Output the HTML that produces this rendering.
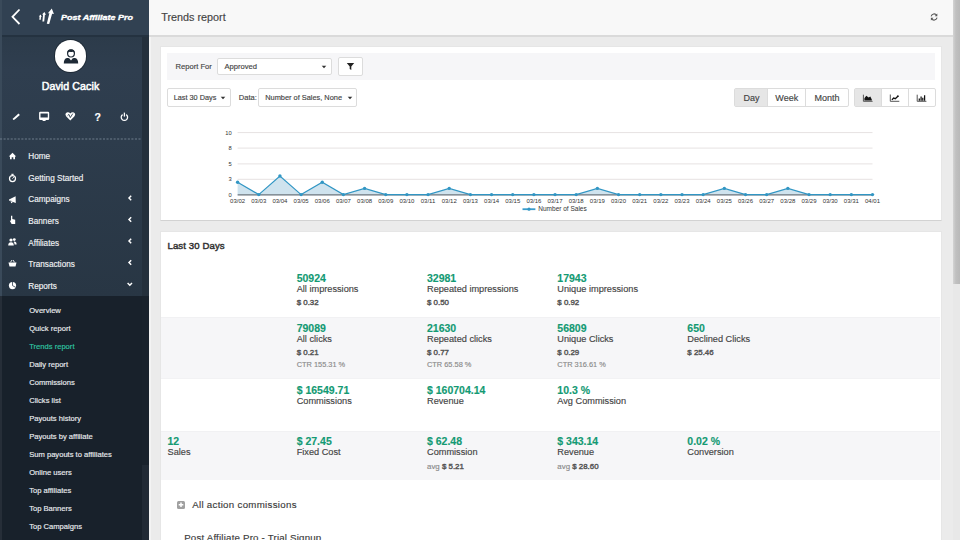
<!DOCTYPE html>
<html><head><meta charset="utf-8">
<style>
*{box-sizing:border-box;margin:0;padding:0}
html,body{width:960px;height:540px;overflow:hidden;background:#ebebeb;font-family:"Liberation Sans",sans-serif;color:#333;position:relative}
.a{position:absolute;white-space:nowrap;line-height:1;-webkit-text-stroke:0.15px currentColor}
svg.a{overflow:visible}
</style></head><body>
<div class="a" style="left:0px;top:0px;width:149px;height:540px;background:#2e3d4e;background:linear-gradient(#2c3b4a 36px,#2f3e4f 70px,#2d3c4c 140px,#283644 296px);"></div>
<div class="a" style="left:0px;top:0px;width:149px;height:35px;background:#314152;"></div>
<div class="a" style="left:0px;top:35px;width:149px;height:2px;background:#243240;"></div>
<div class="a" style="left:142px;top:36.6px;width:7px;height:259.4px;background:#24303c;"></div>
<div class="a" style="left:0px;top:296px;width:142px;height:244px;background:#18212b;"></div>
<div class="a" style="left:142px;top:296px;width:7px;height:244px;background:#19222c;"></div>
<div class="a" style="left:142px;top:465px;width:7px;height:75px;background:#212a35;"></div>
<div class="a" style="left:0px;top:0px;width:1.5px;height:296px;background:#3a4a5a;"></div>
<div class="a" style="left:0px;top:296px;width:1.5px;height:244px;background:#262e38;"></div>
<div class="a" style="left:149px;top:36px;width:2px;height:504px;background:#f3f3f3;"></div>
<svg class="a" style="left:0;top:0" width="149" height="140" viewBox="0 0 149 140"><path d="M19.5 9.5 L12.5 16.8 L19.5 24" fill="none" stroke="#fff" stroke-width="1.8"/><path d="M39.3 19.8 L39.6 16.6 L38.8 16.6 L40.5 14.6 L41.8 16.7 L41 16.7 L40.8 19.8Z" fill="#fff"/><path d="M42.4 21.6 L43.1 14.6 L42 14.6 L44.4 11.9 L46 14.7 L44.9 14.7 L44.2 21.6Z" fill="#fff"/><path d="M46.8 23.8 L49.4 13.3 L47.9 13.2 L51.8 8.6 L53.9 14 L52.1 13.7 L49.2 23.9Z" fill="#fff"/></svg>
<div class="a" style="left:60.50px;top:13.86px;font-size:7.9px;color:#fff;font-weight:700;font-style:italic;transform:scaleX(1.14);transform-origin:0 0;-webkit-text-stroke:0.35px #fff;">Post Affiliate Pro</div>
<div class="a" style="left:55.1px;top:40.4px;width:31.4px;height:31.4px;background:#fff;border-radius:50%;box-shadow:0 0 0 1px #1f2b37;"></div>
<svg class="a" style="left:60px;top:45px" width="22" height="22" viewBox="60 45 22 22"><circle cx="71" cy="53.6" r="3.4" fill="#fff" stroke="#1e2a36" stroke-width="1.2"/><path d="M67.3 53.4 Q67.1 49.3 71 49.3 Q74.9 49.3 74.7 53.4 Q74 51.9 72.6 51.7 Q71.4 52.4 69.9 51.8 Q68.1 52 67.3 53.4Z" fill="#1e2a36"/><path d="M63.8 63.4 Q63.8 58.6 67 58 Q68.5 57.8 69.2 58.2 L71 60.6 L72.8 58.2 Q73.5 57.8 75 58 Q78.2 58.6 78.2 63.4Z" fill="#1e2a36"/></svg>
<div class="a" style="left:41.70px;top:80.50px;font-size:10.6px;color:#fff;font-weight:400;-webkit-text-stroke:0.5px #fff;letter-spacing:0.1px;">David Cacik</div>
<svg class="a" style="left:0;top:100px" width="149" height="40" viewBox="0 100 149 40"><path d="M12.8 120 L13.3 118.3 L18.5 113.6 L19.9 115 L14.7 119.6Z" fill="#fff"/><path d="M40.3 111.8 H48 Q49.2 111.8 49.2 113 V118.8 Q49.2 120 48 120 H40.3 Q39.1 120 39.1 118.8 V113 Q39.1 111.8 40.3 111.8Z M40.5 113.5 V117.6 H47.8 V113.5Z" fill="#fff" fill-rule="evenodd"/><rect x="42.6" y="119.6" width="3" height="1.4" fill="#fff"/><path d="M70.3 120.4 L66.3 116.4 Q64.8 114.6 65.8 113.2 Q67.3 111.5 69.2 112.5 L70.3 113.4 L71.4 112.5 Q73.3 111.5 74.8 113.2 Q75.8 114.6 74.3 116.4Z" fill="#fff"/><path d="M67.6 115.6 L68.9 114.4 L70.3 117.6 L72.8 113.6" fill="none" stroke="#2e3d4e" stroke-width="0.9"/><path d="M122.6 114.6 A3.2 3.2 0 1 0 126.2 114.6" fill="none" stroke="#fff" stroke-width="1.3"/><path d="M124.4 112.6 V116.6" stroke="#fff" stroke-width="1.3"/></svg>
<div class="a" style="left:94.60px;top:112.18px;font-size:10.5px;color:#fff;font-weight:700;">?</div>
<svg class="a" style="left:0;top:138px" width="141" height="2" viewBox="0 0 141 2"><line x1="0" y1="1" x2="141" y2="1" stroke="#6f7d8b" stroke-width="1.1" stroke-dasharray="2.1 1.45"/></svg>
<div class="a" style="left:28.30px;top:153.31px;font-size:8.2px;color:#f0f2f4;font-weight:400;">Home</div>
<div class="a" style="left:28.30px;top:174.86px;font-size:8.2px;color:#f0f2f4;font-weight:400;">Getting Started</div>
<div class="a" style="left:28.30px;top:196.41px;font-size:8.2px;color:#f0f2f4;font-weight:400;">Campaigns</div>
<div class="a" style="left:28.30px;top:217.96px;font-size:8.2px;color:#f0f2f4;font-weight:400;">Banners</div>
<div class="a" style="left:28.30px;top:239.51px;font-size:8.2px;color:#f0f2f4;font-weight:400;">Affiliates</div>
<div class="a" style="left:28.30px;top:261.06px;font-size:8.2px;color:#f0f2f4;font-weight:400;">Transactions</div>
<div class="a" style="left:28.30px;top:282.61px;font-size:8.2px;color:#f0f2f4;font-weight:400;">Reports</div>
<svg class="a" style="left:0;top:140px" width="141" height="160" viewBox="0 140 141 160"><path d="M8.8 156.4 L12.5 152.8 L16.2 156.4 L15 156.4 L15 159.3 L13.3 159.3 L13.3 157.2 L11.7 157.2 L11.7 159.3 L10 159.3 L10 156.4Z" fill="#fff"/><circle cx="12.5" cy="178.6" r="3" fill="none" stroke="#fff" stroke-width="1.2"/><path d="M11.3 174.3 H13.7 M12.5 174.3 V175.6 M12.5 178.6 L13.8 177.2" stroke="#fff" stroke-width="1"/><path d="M9 199.6 L15.6 196.2 L15.8 203 L9 200.6Z M10.2 200.6 L11.3 203.2 L12.5 202.8 L11.8 201" fill="#fff"/><path d="M11 215.8 L12.3 215.8 L12.3 219 L15.2 219.8 L15.2 224 L11.6 224 L9.8 220.8 L11 220.6Z" fill="#fff"/><circle cx="11" cy="240" r="1.6" fill="#fff"/><circle cx="14.3" cy="239.6" r="1.4" fill="#fff"/><path d="M8.2 245.6 Q8.2 242.2 11 242.2 Q13.8 242.2 13.8 245.6Z M14.3 241.6 Q16.6 241.6 16.6 244.6 L14.6 244.6 Q14.6 242.6 13.6 241.9Z" fill="#fff"/><path d="M8.5 262.6 H16.5 L15.5 266.6 H9.5Z" fill="#fff"/><path d="M10.5 262.3 L12 260 M14.5 262.3 L13 260" stroke="#fff" stroke-width="0.9"/><circle cx="12.5" cy="285.6" r="3.6" fill="#fff"/><path d="M12.5 285.6 L12.5 282 M12.5 285.6 L15.6 287.3" stroke="#2e3d4e" stroke-width="0.8"/><path d="M131.2 195.80 L129 198.00 L131.2 200.20" fill="none" stroke="#fff" stroke-width="1.45"/><path d="M131.2 217.30 L129 219.50 L131.2 221.70" fill="none" stroke="#fff" stroke-width="1.45"/><path d="M131.2 238.80 L129 241.00 L131.2 243.20" fill="none" stroke="#fff" stroke-width="1.45"/><path d="M131.2 260.30 L129 262.50 L131.2 264.70" fill="none" stroke="#fff" stroke-width="1.45"/><path d="M127.6 283.0 L129.8 285.2 L132.0 283.0" fill="none" stroke="#fff" stroke-width="1.45"/></svg>
<div class="a" style="left:29.20px;top:307.12px;font-size:7.6px;color:#e9ecef;font-weight:400;">Overview</div>
<div class="a" style="left:29.20px;top:325.12px;font-size:7.6px;color:#e9ecef;font-weight:400;">Quick report</div>
<div class="a" style="left:29.20px;top:343.12px;font-size:7.6px;color:#2fc6a2;font-weight:400;">Trends report</div>
<div class="a" style="left:29.20px;top:361.12px;font-size:7.6px;color:#e9ecef;font-weight:400;">Daily report</div>
<div class="a" style="left:29.20px;top:379.12px;font-size:7.6px;color:#e9ecef;font-weight:400;">Commissions</div>
<div class="a" style="left:29.20px;top:397.12px;font-size:7.6px;color:#e9ecef;font-weight:400;">Clicks list</div>
<div class="a" style="left:29.20px;top:415.12px;font-size:7.6px;color:#e9ecef;font-weight:400;">Payouts history</div>
<div class="a" style="left:29.20px;top:433.12px;font-size:7.6px;color:#e9ecef;font-weight:400;">Payouts by affiliate</div>
<div class="a" style="left:29.20px;top:451.12px;font-size:7.6px;color:#e9ecef;font-weight:400;">Sum payouts to affiliates</div>
<div class="a" style="left:29.20px;top:469.12px;font-size:7.6px;color:#e9ecef;font-weight:400;">Online users</div>
<div class="a" style="left:29.20px;top:487.12px;font-size:7.6px;color:#e9ecef;font-weight:400;">Top affiliates</div>
<div class="a" style="left:29.20px;top:505.12px;font-size:7.6px;color:#e9ecef;font-weight:400;">Top Banners</div>
<div class="a" style="left:29.20px;top:523.12px;font-size:7.6px;color:#e9ecef;font-weight:400;">Top Campaigns</div>
<div class="a" style="left:149px;top:0px;width:804px;height:35px;background:#f8f8f8;"></div>
<div class="a" style="left:149px;top:35px;width:804px;height:1.5px;background:#dadada;"></div>
<div class="a" style="left:161.30px;top:11.93px;font-size:10.8px;color:#444;font-weight:400;">Trends report</div>
<svg class="a" style="left:928px;top:11px" width="12" height="12" viewBox="0 0 12 12"><path d="M3.1 5.3 A3.1 3.1 0 0 1 8.7 4.3" fill="none" stroke="#555" stroke-width="1.05"/><path d="M9.3 2.5 L9.3 5.3 L6.7 5.3Z" fill="#555"/><path d="M9.1 6.7 A3.1 3.1 0 0 1 3.5 7.7" fill="none" stroke="#555" stroke-width="1.05"/><path d="M2.9 9.5 L2.9 6.7 L5.5 6.7Z" fill="#555"/></svg>
<div class="a" style="left:953px;top:0px;width:7px;height:540px;background:#e8e8e8;"></div>
<div class="a" style="left:953px;top:0px;width:7px;height:283.5px;background:#c2c2c2;background:linear-gradient(90deg,#d4d4d4,#c0c0c0 40%,#b9b9b9);"></div>
<div class="a" style="left:160px;top:46px;width:782px;height:175px;background:#fff;border:1px solid #e6e6e6;border-bottom:1.5px solid #d2d2d2;box-sizing:border-box;"></div>
<div class="a" style="left:167px;top:53px;width:768px;height:27px;background:#f6f6f8;"></div>
<div class="a" style="left:175.50px;top:63.02px;font-size:7.6px;color:#444;font-weight:400;">Report For</div>
<div class="a" style="left:217px;top:58px;width:115px;height:17px;background:#fff;border:1px solid #dcdcdc;border-radius:2px;box-sizing:border-box;"></div>
<div class="a" style="left:224.40px;top:62.82px;font-size:7.6px;color:#444;font-weight:400;">Approved</div>
<svg class="a" style="left:320.8px;top:64.6px" width="6" height="4" viewBox="0 0 6 4"><path d="M0.7 0.8 H5.3 L3 3.2Z" fill="#333"/></svg>
<div class="a" style="left:338px;top:57px;width:25px;height:19px;background:#fff;border:1px solid #dcdcdc;border-radius:2px;box-sizing:border-box;"></div>
<svg class="a" style="left:346px;top:62px" width="9" height="9" viewBox="0 0 9 9"><path d="M0.8 1 H8.2 L5.3 4.6 V8 L3.7 7 V4.6Z" fill="#222"/></svg>
<div class="a" style="left:167px;top:88px;width:64px;height:19px;background:#fff;border:1px solid #dcdcdc;border-radius:2px;box-sizing:border-box;"></div>
<div class="a" style="left:173.70px;top:94.17px;font-size:7.3px;color:#444;font-weight:400;">Last 30 Days</div>
<svg class="a" style="left:220.3px;top:95.6px" width="6" height="4" viewBox="0 0 6 4"><path d="M0.7 0.8 H5.3 L3 3.2Z" fill="#333"/></svg>
<div class="a" style="left:238.80px;top:94.00px;font-size:7.5px;color:#444;font-weight:400;">Data:</div>
<div class="a" style="left:258px;top:88px;width:99px;height:19px;background:#fff;border:1px solid #dcdcdc;border-radius:2px;box-sizing:border-box;"></div>
<div class="a" style="left:265.20px;top:94.08px;font-size:7.4px;color:#444;font-weight:400;">Number of Sales, None</div>
<svg class="a" style="left:346.8px;top:95.6px" width="6" height="4" viewBox="0 0 6 4"><path d="M0.7 0.8 H5.3 L3 3.2Z" fill="#333"/></svg>
<div class="a" style="left:734px;top:88px;width:115px;height:19px;background:#fff;border:1px solid #dcdcdc;border-radius:2px;box-sizing:border-box;"></div>
<div class="a" style="left:735px;top:89px;width:32px;height:17px;background:#e6e6e6;"></div>
<div class="a" style="left:767px;top:89px;width:1px;height:17px;background:#dcdcdc;"></div>
<div class="a" style="left:805px;top:89px;width:1px;height:17px;background:#dcdcdc;"></div>
<div class="a" style="left:743.40px;top:93.94px;font-size:9px;color:#444;font-weight:400;">Day</div>
<div class="a" style="left:775.30px;top:93.94px;font-size:9px;color:#444;font-weight:400;">Week</div>
<div class="a" style="left:814.40px;top:93.94px;font-size:9px;color:#444;font-weight:400;">Month</div>
<div class="a" style="left:854px;top:88px;width:82px;height:19px;background:#fff;border:1px solid #dcdcdc;border-radius:2px;box-sizing:border-box;"></div>
<div class="a" style="left:855px;top:89px;width:26px;height:17px;background:#e6e6e6;"></div>
<div class="a" style="left:881px;top:89px;width:1px;height:17px;background:#dcdcdc;"></div>
<div class="a" style="left:908px;top:89px;width:1px;height:17px;background:#dcdcdc;"></div>
<svg class="a" style="left:860px;top:92px" width="70" height="12" viewBox="860 92 70 12"><path d="M863.4 94.7 V101.3 H872.6" fill="none" stroke="#555" stroke-width="1"/><path d="M864.4 100.6 V98.2 L866.3 95.8 L868.6 97.4 L870.3 96.6 L871.8 99.6 V100.6Z" fill="#111"/><path d="M890.3 94.5 V101.3 H899.3" fill="none" stroke="#555" stroke-width="1"/><path d="M891.9 99.9 L893.6 98.1 L895.3 98.7 L897.9 96.3" fill="none" stroke="#111" stroke-width="1.35"/><circle cx="897.9" cy="96.2" r="0.9" fill="#111"/><path d="M917.2 94.7 V101.3 H926.4" fill="none" stroke="#555" stroke-width="1"/><path d="M919.3 100.8 V98.6 M921.1 100.8 V96.6 M922.8 100.8 V97.8 M924.6 100.8 V95.2" stroke="#111" stroke-width="1.25"/></svg>
<svg class="a" style="left:161px;top:120px" width="779" height="100" viewBox="161 120 779 100"><line x1="237.6" y1="132.6" x2="872.5" y2="132.6" stroke="#e6e2e2" stroke-width="1"/><line x1="237.6" y1="148.1" x2="872.5" y2="148.1" stroke="#e6e2e2" stroke-width="1"/><line x1="237.6" y1="163.9" x2="872.5" y2="163.9" stroke="#e6e2e2" stroke-width="1"/><line x1="237.6" y1="179.3" x2="872.5" y2="179.3" stroke="#e6e2e2" stroke-width="1"/><path d="M237.60 194.6 L237.60 182.20 L258.76 194.60 L279.93 176.00 L301.09 194.60 L322.25 182.20 L343.42 194.60 L364.58 188.40 L385.74 194.60 L406.91 194.60 L428.07 194.60 L449.23 188.40 L470.40 194.60 L491.56 194.60 L512.72 194.60 L533.89 194.60 L555.05 194.60 L576.21 194.60 L597.38 188.40 L618.54 194.60 L639.70 194.60 L660.87 194.60 L682.03 194.60 L703.19 194.60 L724.36 188.40 L745.52 194.60 L766.68 194.60 L787.85 188.40 L809.01 194.60 L830.17 194.60 L851.34 194.60 L872.50 194.60 L872.5 194.6Z" fill="#cfe3ee"/><line x1="237.6" y1="194.8" x2="872.5" y2="194.8" stroke="#66707a" stroke-width="1.2"/><polyline points="237.60,182.20 258.76,194.60 279.93,176.00 301.09,194.60 322.25,182.20 343.42,194.60 364.58,188.40 385.74,194.60 406.91,194.60 428.07,194.60 449.23,188.40 470.40,194.60 491.56,194.60 512.72,194.60 533.89,194.60 555.05,194.60 576.21,194.60 597.38,188.40 618.54,194.60 639.70,194.60 660.87,194.60 682.03,194.60 703.19,194.60 724.36,188.40 745.52,194.60 766.68,194.60 787.85,188.40 809.01,194.60 830.17,194.60 851.34,194.60 872.50,194.60" fill="none" stroke="#3196c4" stroke-width="1.2"/><circle cx="237.60" cy="182.20" r="1.7" fill="#3196c4"/><circle cx="258.76" cy="194.60" r="1.7" fill="#3196c4"/><circle cx="279.93" cy="176.00" r="1.7" fill="#3196c4"/><circle cx="301.09" cy="194.60" r="1.7" fill="#3196c4"/><circle cx="322.25" cy="182.20" r="1.7" fill="#3196c4"/><circle cx="343.42" cy="194.60" r="1.7" fill="#3196c4"/><circle cx="364.58" cy="188.40" r="1.7" fill="#3196c4"/><circle cx="385.74" cy="194.60" r="1.7" fill="#3196c4"/><circle cx="406.91" cy="194.60" r="1.7" fill="#3196c4"/><circle cx="428.07" cy="194.60" r="1.7" fill="#3196c4"/><circle cx="449.23" cy="188.40" r="1.7" fill="#3196c4"/><circle cx="470.40" cy="194.60" r="1.7" fill="#3196c4"/><circle cx="491.56" cy="194.60" r="1.7" fill="#3196c4"/><circle cx="512.72" cy="194.60" r="1.7" fill="#3196c4"/><circle cx="533.89" cy="194.60" r="1.7" fill="#3196c4"/><circle cx="555.05" cy="194.60" r="1.7" fill="#3196c4"/><circle cx="576.21" cy="194.60" r="1.7" fill="#3196c4"/><circle cx="597.38" cy="188.40" r="1.7" fill="#3196c4"/><circle cx="618.54" cy="194.60" r="1.7" fill="#3196c4"/><circle cx="639.70" cy="194.60" r="1.7" fill="#3196c4"/><circle cx="660.87" cy="194.60" r="1.7" fill="#3196c4"/><circle cx="682.03" cy="194.60" r="1.7" fill="#3196c4"/><circle cx="703.19" cy="194.60" r="1.7" fill="#3196c4"/><circle cx="724.36" cy="188.40" r="1.7" fill="#3196c4"/><circle cx="745.52" cy="194.60" r="1.7" fill="#3196c4"/><circle cx="766.68" cy="194.60" r="1.7" fill="#3196c4"/><circle cx="787.85" cy="188.40" r="1.7" fill="#3196c4"/><circle cx="809.01" cy="194.60" r="1.7" fill="#3196c4"/><circle cx="830.17" cy="194.60" r="1.7" fill="#3196c4"/><circle cx="851.34" cy="194.60" r="1.7" fill="#3196c4"/><circle cx="872.50" cy="194.60" r="1.7" fill="#3196c4"/><text x="231.8" y="134.7" font-size="5.8" text-anchor="end" fill="#333" font-family="Liberation Sans">10</text><text x="231.8" y="150.2" font-size="5.8" text-anchor="end" fill="#333" font-family="Liberation Sans">8</text><text x="231.8" y="166.0" font-size="5.8" text-anchor="end" fill="#333" font-family="Liberation Sans">5</text><text x="231.8" y="181.4" font-size="5.8" text-anchor="end" fill="#333" font-family="Liberation Sans">3</text><text x="231.8" y="196.7" font-size="5.8" text-anchor="end" fill="#333" font-family="Liberation Sans">0</text><text x="237.60" y="203.4" font-size="6" text-anchor="middle" fill="#333" font-family="Liberation Sans">03/02</text><text x="258.76" y="203.4" font-size="6" text-anchor="middle" fill="#333" font-family="Liberation Sans">03/03</text><text x="279.93" y="203.4" font-size="6" text-anchor="middle" fill="#333" font-family="Liberation Sans">03/04</text><text x="301.09" y="203.4" font-size="6" text-anchor="middle" fill="#333" font-family="Liberation Sans">03/05</text><text x="322.25" y="203.4" font-size="6" text-anchor="middle" fill="#333" font-family="Liberation Sans">03/06</text><text x="343.42" y="203.4" font-size="6" text-anchor="middle" fill="#333" font-family="Liberation Sans">03/07</text><text x="364.58" y="203.4" font-size="6" text-anchor="middle" fill="#333" font-family="Liberation Sans">03/08</text><text x="385.74" y="203.4" font-size="6" text-anchor="middle" fill="#333" font-family="Liberation Sans">03/09</text><text x="406.91" y="203.4" font-size="6" text-anchor="middle" fill="#333" font-family="Liberation Sans">03/10</text><text x="428.07" y="203.4" font-size="6" text-anchor="middle" fill="#333" font-family="Liberation Sans">03/11</text><text x="449.23" y="203.4" font-size="6" text-anchor="middle" fill="#333" font-family="Liberation Sans">03/12</text><text x="470.40" y="203.4" font-size="6" text-anchor="middle" fill="#333" font-family="Liberation Sans">03/13</text><text x="491.56" y="203.4" font-size="6" text-anchor="middle" fill="#333" font-family="Liberation Sans">03/14</text><text x="512.72" y="203.4" font-size="6" text-anchor="middle" fill="#333" font-family="Liberation Sans">03/15</text><text x="533.89" y="203.4" font-size="6" text-anchor="middle" fill="#333" font-family="Liberation Sans">03/16</text><text x="555.05" y="203.4" font-size="6" text-anchor="middle" fill="#333" font-family="Liberation Sans">03/17</text><text x="576.21" y="203.4" font-size="6" text-anchor="middle" fill="#333" font-family="Liberation Sans">03/18</text><text x="597.38" y="203.4" font-size="6" text-anchor="middle" fill="#333" font-family="Liberation Sans">03/19</text><text x="618.54" y="203.4" font-size="6" text-anchor="middle" fill="#333" font-family="Liberation Sans">03/20</text><text x="639.70" y="203.4" font-size="6" text-anchor="middle" fill="#333" font-family="Liberation Sans">03/21</text><text x="660.87" y="203.4" font-size="6" text-anchor="middle" fill="#333" font-family="Liberation Sans">03/22</text><text x="682.03" y="203.4" font-size="6" text-anchor="middle" fill="#333" font-family="Liberation Sans">03/23</text><text x="703.19" y="203.4" font-size="6" text-anchor="middle" fill="#333" font-family="Liberation Sans">03/24</text><text x="724.36" y="203.4" font-size="6" text-anchor="middle" fill="#333" font-family="Liberation Sans">03/25</text><text x="745.52" y="203.4" font-size="6" text-anchor="middle" fill="#333" font-family="Liberation Sans">03/26</text><text x="766.68" y="203.4" font-size="6" text-anchor="middle" fill="#333" font-family="Liberation Sans">03/27</text><text x="787.85" y="203.4" font-size="6" text-anchor="middle" fill="#333" font-family="Liberation Sans">03/28</text><text x="809.01" y="203.4" font-size="6" text-anchor="middle" fill="#333" font-family="Liberation Sans">03/29</text><text x="830.17" y="203.4" font-size="6" text-anchor="middle" fill="#333" font-family="Liberation Sans">03/30</text><text x="851.34" y="203.4" font-size="6" text-anchor="middle" fill="#333" font-family="Liberation Sans">03/31</text><text x="872.50" y="203.4" font-size="6" text-anchor="middle" fill="#333" font-family="Liberation Sans">04/01</text><line x1="522.5" y1="209.2" x2="535.4" y2="209.2" stroke="#3a9ccc" stroke-width="1.8"/><circle cx="529" cy="209.2" r="1.6" fill="#3196c4"/><text x="538.3" y="211.3" font-size="6.5" fill="#333" font-family="Liberation Sans">Number of Sales</text></svg>
<div class="a" style="left:160px;top:231px;width:782px;height:320px;background:#fff;border:1px solid #e6e6e6;box-sizing:border-box;"></div>
<div class="a" style="left:167.50px;top:240.84px;font-size:9.6px;color:#333;font-weight:400;-webkit-text-stroke:0.45px #333;letter-spacing:0.1px;">Last 30 Days</div>
<div class="a" style="left:161px;top:317px;width:779px;height:62px;background:#f6f6f8;border-top:1px solid #f1f1f3;border-bottom:1px solid #f2f2f4;"></div>
<div class="a" style="left:161px;top:431px;width:779px;height:49px;background:#f6f6f8;border-top:1px solid #f1f1f3;"></div>
<div class="a" style="left:296.70px;top:273.18px;font-size:10.5px;color:#139a73;font-weight:700;">50924</div>
<div class="a" style="left:296.70px;top:285.17px;font-size:9.2px;color:#444;font-weight:400;">All impressions</div>
<div class="a" style="left:296.70px;top:299.16px;font-size:7.9px;color:#555;font-weight:400;-webkit-text-stroke:0.4px #555;">$ 0.32</div>
<div class="a" style="left:427.00px;top:273.18px;font-size:10.5px;color:#139a73;font-weight:700;">32981</div>
<div class="a" style="left:427.00px;top:285.17px;font-size:9.2px;color:#444;font-weight:400;">Repeated impressions</div>
<div class="a" style="left:427.00px;top:299.16px;font-size:7.9px;color:#555;font-weight:400;-webkit-text-stroke:0.4px #555;">$ 0.50</div>
<div class="a" style="left:557.30px;top:273.18px;font-size:10.5px;color:#139a73;font-weight:700;">17943</div>
<div class="a" style="left:557.30px;top:285.17px;font-size:9.2px;color:#444;font-weight:400;">Unique impressions</div>
<div class="a" style="left:557.30px;top:299.16px;font-size:7.9px;color:#555;font-weight:400;-webkit-text-stroke:0.4px #555;">$ 0.92</div>
<div class="a" style="left:296.70px;top:322.78px;font-size:10.5px;color:#139a73;font-weight:700;">79089</div>
<div class="a" style="left:296.70px;top:334.77px;font-size:9.2px;color:#444;font-weight:400;">All clicks</div>
<div class="a" style="left:296.70px;top:348.76px;font-size:7.9px;color:#555;font-weight:400;-webkit-text-stroke:0.4px #555;">$ 0.21</div>
<div class="a" style="left:296.70px;top:361.48px;font-size:7.4px;color:#8a8a8a;font-weight:400;">CTR 155.31 %</div>
<div class="a" style="left:427.00px;top:322.78px;font-size:10.5px;color:#139a73;font-weight:700;">21630</div>
<div class="a" style="left:427.00px;top:334.77px;font-size:9.2px;color:#444;font-weight:400;">Repeated clicks</div>
<div class="a" style="left:427.00px;top:348.76px;font-size:7.9px;color:#555;font-weight:400;-webkit-text-stroke:0.4px #555;">$ 0.77</div>
<div class="a" style="left:427.00px;top:361.48px;font-size:7.4px;color:#8a8a8a;font-weight:400;">CTR 65.58 %</div>
<div class="a" style="left:557.30px;top:322.78px;font-size:10.5px;color:#139a73;font-weight:700;">56809</div>
<div class="a" style="left:557.30px;top:334.77px;font-size:9.2px;color:#444;font-weight:400;">Unique Clicks</div>
<div class="a" style="left:557.30px;top:348.76px;font-size:7.9px;color:#555;font-weight:400;-webkit-text-stroke:0.4px #555;">$ 0.29</div>
<div class="a" style="left:557.30px;top:361.48px;font-size:7.4px;color:#8a8a8a;font-weight:400;">CTR 316.61 %</div>
<div class="a" style="left:687.30px;top:322.78px;font-size:10.5px;color:#139a73;font-weight:700;">650</div>
<div class="a" style="left:687.30px;top:334.77px;font-size:9.2px;color:#444;font-weight:400;">Declined Clicks</div>
<div class="a" style="left:687.30px;top:348.76px;font-size:7.9px;color:#555;font-weight:400;-webkit-text-stroke:0.4px #555;">$ 25.46</div>
<div class="a" style="left:296.70px;top:384.88px;font-size:10.5px;color:#139a73;font-weight:700;">$ 16549.71</div>
<div class="a" style="left:296.70px;top:396.87px;font-size:9.2px;color:#444;font-weight:400;">Commissions</div>
<div class="a" style="left:427.00px;top:384.88px;font-size:10.5px;color:#139a73;font-weight:700;">$ 160704.14</div>
<div class="a" style="left:427.00px;top:396.87px;font-size:9.2px;color:#444;font-weight:400;">Revenue</div>
<div class="a" style="left:557.30px;top:384.88px;font-size:10.5px;color:#139a73;font-weight:700;">10.3 %</div>
<div class="a" style="left:557.30px;top:396.87px;font-size:9.2px;color:#444;font-weight:400;">Avg Commission</div>
<div class="a" style="left:167.50px;top:436.18px;font-size:10.5px;color:#139a73;font-weight:700;">12</div>
<div class="a" style="left:167.50px;top:448.17px;font-size:9.2px;color:#444;font-weight:400;">Sales</div>
<div class="a" style="left:296.70px;top:436.18px;font-size:10.5px;color:#139a73;font-weight:700;">$ 27.45</div>
<div class="a" style="left:296.70px;top:448.17px;font-size:9.2px;color:#444;font-weight:400;">Fixed Cost</div>
<div class="a" style="left:427.00px;top:436.18px;font-size:10.5px;color:#139a73;font-weight:700;">$ 62.48</div>
<div class="a" style="left:427.00px;top:448.17px;font-size:9.2px;color:#444;font-weight:400;">Commission</div>
<div class="a" style="left:427.0px;top:462.86px;font-size:7.9px;color:#8a8a8a">avg <span style="color:#555;-webkit-text-stroke:0.4px #555">$ 5.21</span></div>
<div class="a" style="left:557.30px;top:436.18px;font-size:10.5px;color:#139a73;font-weight:700;">$ 343.14</div>
<div class="a" style="left:557.30px;top:448.17px;font-size:9.2px;color:#444;font-weight:400;">Revenue</div>
<div class="a" style="left:557.3px;top:462.86px;font-size:7.9px;color:#8a8a8a">avg <span style="color:#555;-webkit-text-stroke:0.4px #555">$ 28.60</span></div>
<div class="a" style="left:687.30px;top:436.18px;font-size:10.5px;color:#139a73;font-weight:700;">0.02 %</div>
<div class="a" style="left:687.30px;top:448.17px;font-size:9.2px;color:#444;font-weight:400;">Conversion</div>
<div class="a" style="left:176.7px;top:501.3px;width:8px;height:7.6px;background:#a0a0a0;border-radius:1.5px;"></div>
<svg class="a" style="left:176.7px;top:501.3px" width="8" height="7.6" viewBox="0 0 8 7.6"><path d="M4 1.5 V6.1 M1.7 3.8 H6.3" stroke="#fff" stroke-width="1.5"/></svg>
<div class="a" style="left:192.20px;top:500.45px;font-size:9.7px;color:#3a3a3a;font-weight:400;letter-spacing:0.3px;">All action commissions</div>
<div class="a" style="left:184.20px;top:532.65px;font-size:9.7px;color:#3a3a3a;font-weight:400;letter-spacing:0.2px;">Post Affiliate Pro - Trial Signup</div>
</body></html>
